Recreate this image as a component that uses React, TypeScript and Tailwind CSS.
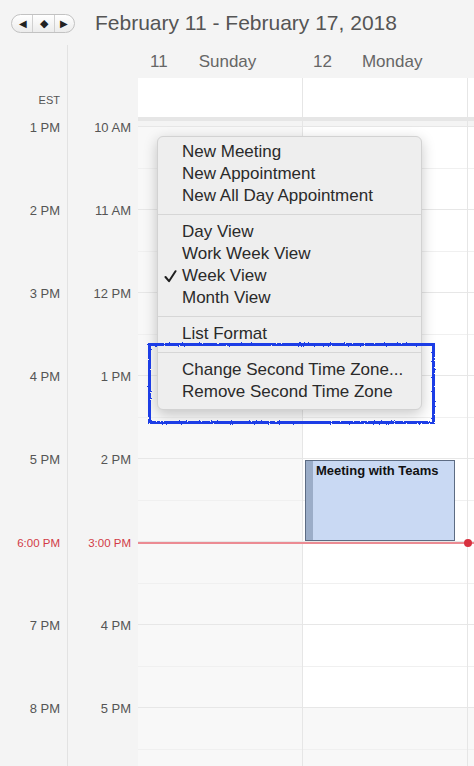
import React from 'react';

const FONT = { fontFamily: '"Liberation Sans", Arial, sans-serif' };

const estHours = ['1 PM', '2 PM', '3 PM', '4 PM', '5 PM', '6:00 PM', '7 PM', '8 PM'];
const localHours = ['10 AM', '11 AM', '12 PM', '1 PM', '2 PM', '3:00 PM', '4 PM', '5 PM'];

type MenuItem = { label: string; checked?: boolean } | 'sep';

const menu: MenuItem[] = [
  { label: 'New Meeting' },
  { label: 'New Appointment' },
  { label: 'New All Day Appointment' },
  'sep',
  { label: 'Day View' },
  { label: 'Work Week View' },
  { label: 'Week View', checked: true },
  { label: 'Month View' },
  'sep',
  { label: 'List Format' },
  'sep',
  { label: 'Change Second Time Zone...' },
  { label: 'Remove Second Time Zone' },
];

function NavControl() {
  return (
    <div className="flex h-[19px] w-[64px] items-stretch overflow-hidden rounded-full border border-[#c2c2c2] bg-gradient-to-b from-white to-[#ececec]">
      <div className="flex w-[21px] items-center justify-center border-r border-[#d0d0d0] pl-[2px] text-[10px] text-[#222]">◀</div>
      <div className="flex w-[22px] items-center justify-center border-r border-[#d0d0d0] text-[11px] text-[#222]">◆</div>
      <div className="flex flex-1 items-center justify-center pr-[2px] text-[10px] text-[#222]">▶</div>
    </div>
  );
}

function LabelColumn({ labels, width }: { labels: string[]; width: string }) {
  return (
    <div className={`${width} shrink-0 pt-[5px]`}>
      {labels.map((l) => {
        const red = l.includes(':');
        return (
          <div key={l} className="h-[83px] pr-[7px] text-right">
            <span
              className={`block -translate-y-[6px] leading-[16px] ${
                red ? 'text-[11.5px] text-[#d23a46]' : 'text-[13px] text-[#555]'
              }`}
            >
              {l}
            </span>
          </div>
        );
      })}
    </div>
  );
}

function DayColumn({ whiteRows, className }: { whiteRows: number; className: string }) {
  return (
    <div className={`shrink-0 pt-[5px] ${className}`}>
      {localHours.map((h, i) => (
        <div key={h} className={`h-[83px] ${i < whiteRows ? 'bg-white' : 'bg-[#f8f8f8]'}`}>
          <div className="h-[42px] border-t border-[#e7e7e7]" />
          <div className="h-[41px] border-t border-[#f0f0f0]" />
        </div>
      ))}
    </div>
  );
}

export default function App() {
  return (
    <div className="relative h-[766px] w-[474px] overflow-hidden bg-[#f4f4f4]" style={FONT}>
      {/* Header */}
      <div className="flex h-[45px] items-start pl-[11px] pt-[14px]">
        <NavControl />
        <div className="ml-[20px] -mt-[4px] text-[21px] leading-[26px] text-[#555]">
          February 11 - February 17, 2018
        </div>
      </div>

      {/* Day names */}
      <div className="flex h-[33px]">
        <div className="w-[68px] shrink-0 border-r border-[#e2e2e2]" />
        <div className="w-[70px] shrink-0" />
        <div className="flex w-[165px] shrink-0 items-center pl-[12px] text-[17px] text-[#666]">
          <span>11</span>
          <span className="ml-[31px]">Sunday</span>
        </div>
        <div className="flex w-[165px] shrink-0 items-center pl-[10px] text-[17px] text-[#666]">
          <span>12</span>
          <span className="ml-[30px]">Monday</span>
        </div>
      </div>

      {/* All-day row */}
      <div className="flex h-[39px]">
        <div className="flex w-[68px] shrink-0 items-center justify-end border-r border-[#e2e2e2] pr-[7px] pt-[6px] text-[11px] text-[#555]">
          EST
        </div>
        <div className="w-[70px] shrink-0" />
        <div className="w-[165px] shrink-0 border-r border-[#e6e6e6] bg-white" />
        <div className="w-[165px] shrink-0 border-r border-[#e6e6e6] bg-white" />
        <div className="flex-1 bg-white" />
      </div>

      {/* Divider band */}
      <div className="flex h-[4px]">
        <div className="w-[68px] shrink-0 border-r border-[#e2e2e2]" />
        <div className="w-[70px] shrink-0" />
        <div className="flex-1 bg-[#e6e6e6]" />
      </div>

      {/* Time grid */}
      <div className="flex">
        <div className="shrink-0 border-r border-[#e2e2e2]">
          <LabelColumn labels={estHours} width="w-[67px]" />
        </div>
        <LabelColumn labels={localHours} width="w-[70px]" />
        <DayColumn whiteRows={0} className="w-[165px] border-r border-[#e6e6e6]" />
        <DayColumn whiteRows={7} className="w-[165px] border-r border-[#e6e6e6]" />
        <DayColumn whiteRows={7} className="flex-1" />
      </div>

      {/* Event */}
      <div className="absolute left-[305px] top-[460px] flex h-[81px] w-[150px] border border-[#5d6c83] bg-[#c9d9f3]">
        <div className="w-[7px] bg-[#9badc8]" />
        <div className="pl-[3px] pt-[2px] text-[13px] font-bold leading-[16px] text-[#111]">Meeting with Teams</div>
      </div>

      {/* Current time */}
      <div className="absolute left-[138px] right-0 top-[542px] h-[2px] bg-[#ec8b93]" />
      <div className="absolute left-[464px] top-[539px] h-[8px] w-[8px] rounded-full bg-[#d8313f]" />

      {/* Context menu */}
      <div className="absolute left-[157px] top-[136px] w-[265px] rounded-[6px] border border-[#d2d2d2] bg-[#eeeeee] pb-[6px] pt-[4px] shadow-[0_4px_14px_rgba(0,0,0,0.22)]">
        {menu.map((m, i) =>
          m === 'sep' ? (
            <div key={i} className="flex h-[14px] items-center">
              <div className="h-px w-full bg-[#d6d6d6]" />
            </div>
          ) : (
            <div key={i} className="relative h-[22px] pl-[24px] text-[17px] leading-[22px] text-[#2a2a2a]">
              {m.checked && (
                <svg className="absolute left-[6px] top-[5px]" width="13" height="13" viewBox="0 0 13 13">
                  <path d="M1.5 7 L5 11.2 L11.5 1.2" fill="none" stroke="#1f1f1f" strokeWidth="2" strokeLinecap="round" strokeLinejoin="round" />
                </svg>
              )}
              {m.label}
            </div>
          )
        )}
      </div>

      {/* Hand-drawn highlight */}
      <svg className="absolute left-[146px] top-[341px]" width="292" height="86" viewBox="0 0 292 86">
        <defs>
          <filter id="rough" x="-5%" y="-10%" width="110%" height="120%">
            <feTurbulence type="fractalNoise" baseFrequency="0.6" numOctaves="2" seed="3" />
            <feDisplacementMap in="SourceGraphic" scale="2.5" />
          </filter>
        </defs>
        <rect x="3.5" y="3.5" width="284" height="78" fill="none" stroke="#1b3ee6" strokeWidth="3" filter="url(#rough)" />
      </svg>
    </div>
  );
}
